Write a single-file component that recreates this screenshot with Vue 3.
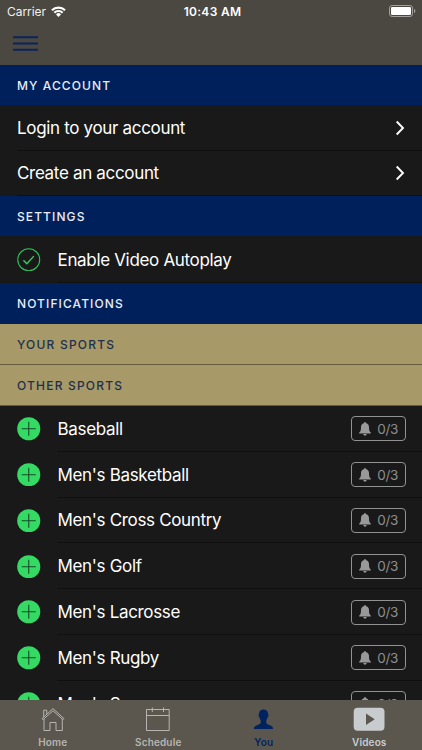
<script setup>
const accountRows = ['Login to your account', 'Create an account']
const sports = [
  'Baseball',
  "Men's Basketball",
  "Men's Cross Country",
  "Men's Golf",
  "Men's Lacrosse",
  "Men's Rugby",
  "Men's Soccer",
]
</script>

<template>
  <div class="screen">
    <header class="top">
      <div class="status">
        <div class="carrier">
          <span>Carrier</span>
          <svg class="wifi" viewBox="0 0 15 11">
            <path d="M.2 3.6A10.3 10.3 0 0 1 14.8 3.6L13.3 5.1A8.2 8.2 0 0 0 1.7 5.1Z" />
            <path d="M2.6 6A6.9 6.9 0 0 1 12.4 6L10.9 7.5A4.8 4.8 0 0 0 4.1 7.5Z" />
            <path d="M5 8.4A3.5 3.5 0 0 1 10 8.4L7.5 10.9Z" />
          </svg>
        </div>
        <span class="clock">10:43 AM</span>
        <svg class="battery" viewBox="0 0 27 12">
          <rect x=".5" y=".5" width="23" height="11" rx="2.6" fill="none" stroke="#a3a19d" />
          <rect x="2" y="2" width="20" height="8" rx="1.2" fill="#fff" />
          <path d="M25 4Q26.4 4.6 26.4 6T25 8Z" fill="#a3a19d" />
        </svg>
      </div>
      <div class="nav">
        <svg class="burger" viewBox="0 0 24 16">
          <path d="M0 2H24M0 8H24M0 14H24" stroke="#0b2460" stroke-width="2" />
        </svg>
      </div>
    </header>

    <main class="list">
      <h2 class="section">MY ACCOUNT</h2>
      <div v-for="row in accountRows" :key="row" class="row link">
        <span class="label">{{ row }}</span>
        <svg class="chevron" viewBox="0 0 10 16">
          <path d="M1.7 1.5L8 8L1.7 14.5" fill="none" stroke="#fff" stroke-width="1.9" />
        </svg>
      </div>
      <h2 class="section">SETTINGS</h2>
      <div class="row setting">
        <svg class="round" viewBox="0 0 24 24">
          <circle cx="12" cy="12" r="11.2" fill="none" stroke="#30c35a" stroke-width="1.1" />
          <path d="M6.6 12.6L10 16L17.2 8.3" fill="none" stroke="#34d562" stroke-width="1.4" />
        </svg>
        <span class="label">Enable Video Autoplay</span>
      </div>
      <h2 class="section notifications">NOTIFICATIONS</h2>
      <h3 class="section gold">YOUR SPORTS</h3>
      <h3 class="section gold">OTHER SPORTS</h3>
      <div v-for="sport in sports" :key="sport" class="row sport">
        <svg class="round" viewBox="0 0 24 24">
          <circle cx="12" cy="12" r="11.8" fill="#35da64" />
          <path d="M4.8 12H19.2M12 4.8V19.2" stroke="#164b25" stroke-width="1.1" />
        </svg>
        <span class="label">{{ sport }}</span>
        <span class="badge">
          <svg class="bell" viewBox="0 0 12 14">
            <path d="M6 .2C6.8 .2 7.2 .7 7.2 1.3C9.2 1.8 10 3.4 10 5.2C10 8.2 10.4 9.4 11.8 10.6V11.4H.2V10.6C1.6 9.4 2 8.2 2 5.2C2 3.4 2.8 1.8 4.8 1.3C4.8 .7 5.2 .2 6 .2ZM4.3 12.1H7.7C7.5 13.2 6.9 13.7 6 13.7S4.5 13.2 4.3 12.1Z" />
          </svg>
          <span>0/3</span>
        </span>
      </div>
    </main>

    <nav class="tabs">
      <div class="tab">
        <svg class="icon" viewBox="0 0 32 26" fill="none" stroke="currentColor">
          <path d="M5 11.6L16 1.6L27 11.6L26 12.7L16 3.8L6 12.7ZM6.7 9.9V3.2H9.8V7M7 12V23.5H13V15.5H19V23.5H25.3V12" />
        </svg>
        <span class="home">Home</span>
      </div>
      <div class="tab">
        <svg class="icon" viewBox="0 0 32 26" fill="none" stroke="currentColor">
          <path d="M4.5 2.5H27.2V23.5H4.5ZM4.5 8.5H27.2M10.3 .5V5M21.5 .5V5" />
        </svg>
        <span class="schedule">Schedule</span>
      </div>
      <div class="tab active">
        <svg class="icon" viewBox="0 0 32 26" fill="currentColor">
          <path d="M15.5 2.5C18.3 2.5 20 4.2 20 7C20.8 7.5 20.5 9.4 19.7 9.9C19.4 11.3 19 12.2 18.3 13V16C18.8 18.1 25 17.6 25.2 22H5.8C6 17.6 12.2 18.1 12.7 16V13C12 12.2 11.6 11.3 11.3 9.9C10.5 9.4 10.2 7.5 11 7C11 4.2 12.7 2.5 15.5 2.5Z" />
        </svg>
        <span class="you">You</span>
      </div>
      <div class="tab videos">
        <svg class="icon" viewBox="0 0 32 26">
          <rect x=".7" y=".8" width="30.8" height="23" rx="4" fill="#c9cccf" />
          <path d="M13 6.5L21.7 12.2L13 18Z" fill="#5b574f" />
        </svg>
        <span class="video-label">Videos</span>
      </div>
    </nav>
  </div>
</template>

<style>
body {
  margin: 0;
  overflow: hidden;
}
</style>

<style scoped>
.screen {
  width: 422px;
  height: 750px;
  display: flex;
  flex-direction: column;
  overflow: hidden;
  background: #191919;
  color: #fff;
  font-family: Inter, "Liberation Sans", sans-serif;
}
svg {
  display: block;
  flex: none;
}
.top {
  height: 65px;
  flex: none;
  background: #4b4841;
}
.status {
  height: 22px;
  padding: 0 6px 0 7px;
  display: grid;
  grid-template-columns: 1fr auto 1fr;
  align-items: center;
  font-size: 12px;
}
.carrier {
  display: flex;
  align-items: center;
  gap: 5px;
  letter-spacing: -0.05px;
  color: #f1f1f0;
}
.wifi {
  width: 15px;
  height: 11px;
  fill: #fff;
}
.clock {
  font-weight: 600;
  letter-spacing: 0.3px;
  margin-left: 2px;
}
.battery {
  width: 27px;
  height: 12px;
  justify-self: end;
}
.nav {
  padding: 13px 13px 0;
}
.burger {
  width: 25px;
  height: 17px;
}
.list {
  flex: 1;
  min-height: 0;
  overflow: hidden;
}
.section {
  box-sizing: border-box;
  height: 40px;
  margin: 0;
  padding: 1px 17px 0;
  display: flex;
  align-items: center;
  background: #00205c;
  color: #e9edf5;
  font-size: 12px;
  font-weight: 500;
  letter-spacing: 1.1px;
}
.notifications {
  height: 41px;
  padding-top: 0;
}
.gold {
  height: 41px;
  padding-top: 0;
  background: #a79968;
  color: #21304f;
  border-bottom: 1px solid #655c40;
  letter-spacing: 1.2px;
}
.row {
  display: flex;
  align-items: center;
  box-sizing: border-box;
  font-size: 17px;
  letter-spacing: -0.33px;
  background: linear-gradient(#101010, #101010) 57px 100% / 100% 1px no-repeat #191919;
}
.link {
  height: 45.5px;
  padding: 0 17px;
  justify-content: space-between;
  background-position: 17px 100%;
}
.setting {
  height: 47px;
  padding: 0 17px;
}
.sport {
  height: 45.8px;
  padding: 0 16px 0 17px;
}
.round {
  width: 23.5px;
  height: 23.5px;
  margin-right: 17px;
}
.chevron {
  width: 10px;
  height: 16px;
}
.badge {
  box-sizing: border-box;
  width: 55px;
  height: 25px;
  margin-left: auto;
  padding: 0 7px;
  display: flex;
  align-items: center;
  justify-content: space-between;
  border: 1px solid #929292;
  border-radius: 4px;
  color: #8e8e8e;
  font-size: 13.5px;
  letter-spacing: -0.3px;
}
.bell {
  width: 12px;
  height: 14px;
  fill: #999;
}
.tabs {
  height: 50.5px;
  flex: none;
  display: grid;
  grid-template-columns: repeat(4, 1fr);
  background: #5b574f;
}
.tab {
  display: flex;
  flex-direction: column;
  align-items: center;
  padding-top: 7px;
  gap: 3px;
  color: #b7b5b1;
  font-size: 10px;
  line-height: 13px;
  font-weight: 600;
  letter-spacing: 0.15px;
}
.icon {
  width: 32px;
  height: 26px;
}
.active {
  color: #00235f;
}
.videos {
  color: #c9cccf;
}
</style>
